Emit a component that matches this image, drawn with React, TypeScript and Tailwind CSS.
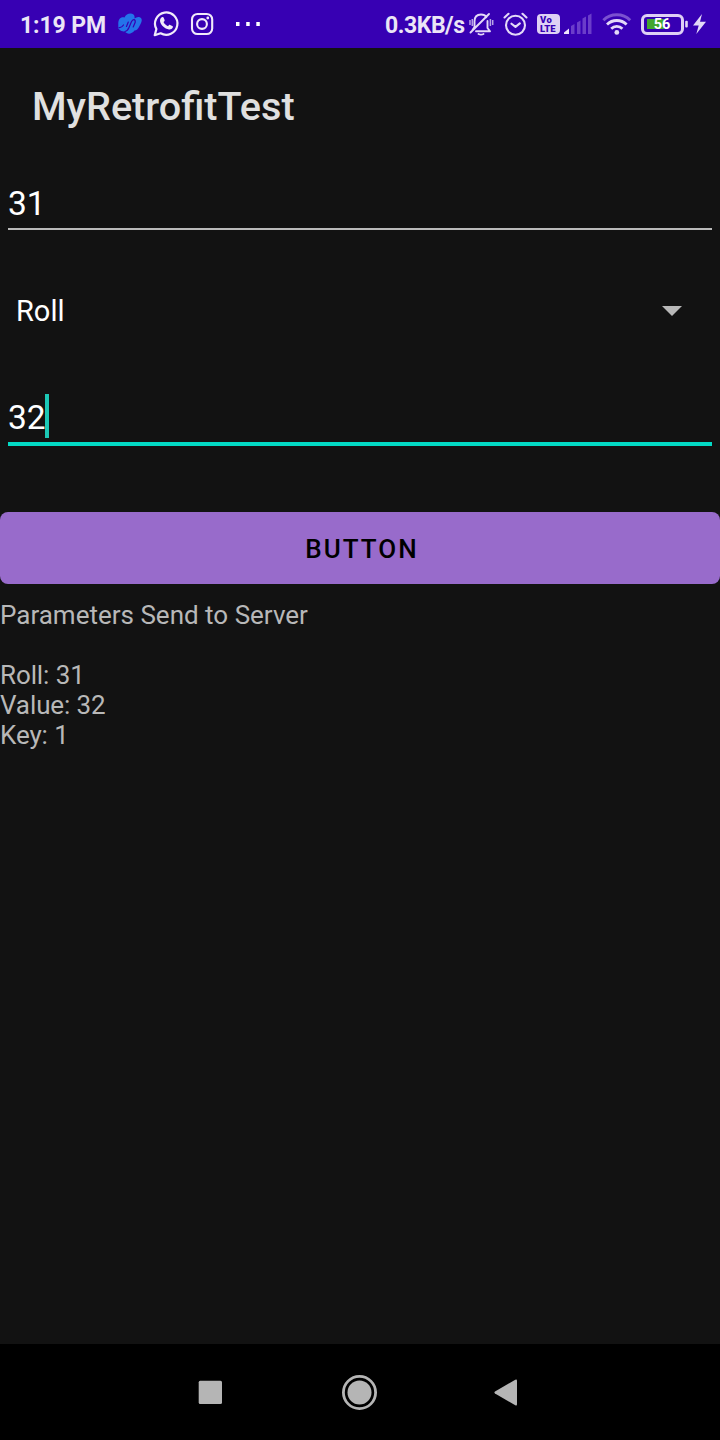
import type { ReactNode } from 'react';

function Icon({ x, w, className = '', children }: { x: number; w: number; className?: string; children: ReactNode }) {
  return (
    <svg width={w} height={48} viewBox={`${x} 0 ${w} 48`} fill="none" className={`shrink-0 ${className}`}>
      {children}
    </svg>
  );
}

const INK = '#e4d9f8';

function StatusBar() {
  return (
    <header className="flex h-12 shrink-0 items-center justify-between bg-[#3700b3] pl-5 pr-3 text-[#ebe5f6]">
      <div className="flex items-center">
        <span className="w-[97px] whitespace-nowrap pt-[4px] text-[23px] leading-7 font-bold tracking-[-0.1px]">1:19 PM</span>
        <Icon x={117} w={27}>
          <path d="M118.300 24.500C118 19 121 16.500 124.500 17.500 126 13.500 131 12.500 133.500 14.500 134.500 15.500 134.800 17 134.500 18.500 137 16.500 140 16.500 141.300 18.500 142.500 20.500 141 23.500 139.500 26 138 29 136.500 30.500 134.500 30.500 131.500 34.500 127 34.500 125 31.500 122 31.500 118.300 30 118.300 27.500z" fill="#2474ea" />
          <path d="M119 27.500q2.500.5 4.500-2.500M125 31.500q2.500-.5 4-4l2.300-5.500q1.200-2.500 2.700-2.300t1.200 2.600l-2 4.700M128.300 22l-1.800 4.500" stroke="#3700b3" strokeWidth="1.200" strokeLinecap="round" />
        </Icon>
        <Icon x={152} w={28} className="ml-2">
          <path d="M154.700 35.200l1.700-6.200a11.200 11.200 0 1 1 4.200 4.300z" stroke="#f1eafa" strokeWidth="2.200" strokeLinejoin="round" />
          <path d="M161.800 17.300c.6-.5 1.500-.4 1.800.3l1 2.300c.2.600-.1 1.200-1.100 2.100 1 2 2.600 3.400 4.600 4.200.9-1.300 1.400-1.600 2-1.300l2.200 1.100c.6.300.8.8.5 1.600-.6 1.500-2.300 2.200-3.800 1.900-4.600-.9-8-4.200-8.900-8-.3-1.800.4-3.300 1.700-4.200z" fill="#f1eafa" />
        </Icon>
        <Icon x={190} w={25} className="ml-2.5">
          <rect x="192" y="14" width="20.200" height="20" rx="5.500" stroke="#f1eafa" strokeWidth="2.100" />
          <circle cx="202" cy="24" r="4.900" stroke="#f1eafa" strokeWidth="2.100" />
          <circle cx="207.800" cy="18" r="1.400" fill="#f1eafa" />
        </Icon>
        <Icon x={234} w={28} className="ml-[19px]">
          <path d="M236 22h3.500v4H236zM246.200 22h3.500v4h-3.500zM256.300 22h3.500v4h-3.500z" fill="#fff" />
        </Icon>
      </div>
      <div className="flex items-center">
        <span className="w-[83px] whitespace-nowrap pt-[4px] text-[23px] leading-7 font-bold tracking-[-0.450px]">0.3KB/s</span>
        <Icon x={468} w={27}>
          <g stroke={INK} strokeWidth="1.900" strokeLinecap="round" strokeLinejoin="round">
            <path d="M474.500 27V21.500c0-4.500 2.500-7 6.500-7 2.600 0 4.500 1 5.500 2.700M487.500 21v7l2.500 3.300h-14M474.500 27l-2 3M489 14l-18.500 18.500" />
            <path d="M478.500 34q2.500 1.300 5 0" />
          </g>
          <path d="M470 20v5M472.300 19v7M490.400 19v7M492.700 20v5" stroke={INK} strokeWidth="1.500" opacity=".75" />
        </Icon>
        <Icon x={502} w={27} className="ml-[7px]">
          <g stroke={INK} strokeWidth="2.100" strokeLinecap="round" strokeLinejoin="round">
            <circle cx="515.500" cy="25.300" r="9.500" />
            <path d="M511.500 23.700l4 3.200 4.300-3.500M504.500 17.500l4-3.700M526.500 17.500l-4-3.700" />
          </g>
        </Icon>
        <div className="ml-2 flex h-5 w-[23px] flex-col items-start justify-center rounded-[4px] bg-[#dfd0f5] pl-[3px] text-[9.500px] leading-[9px] font-black text-[#3700b3]">
          <span className="tracking-[0.4px]">Vo</span>
          <span>LTE</span>
        </div>
        <Icon x={563} w={30} className="ml-[3px]">
          <path d="M564 34v-1.500l5-4V34z" fill="#efe6fc" />
          <path d="M571 26l3.500-2v10H571zM577 22.500l3.500-2V34H577zM582.500 18.500l3.500-2V34h-3.500zM588 15.500l3.500-2V34H588z" fill="#6b3dca" />
        </Icon>
        <Icon x={602} w={30} className="ml-[9px]">
          <path d="M603.400 20.200a19 19 0 0 1 26.800 0" stroke="#7b51d0" strokeWidth="3" />
          <path d="M607 24.500a14 14 0 0 1 19.600 0M611.200 28.700a8 8 0 0 1 11.200 0" stroke="#e4d9f8" strokeWidth="2.800" />
          <circle cx="616.800" cy="32.400" r="2.400" fill={INK} />
        </Icon>
        <div className="ml-[9px] flex h-[21px] w-[43px] items-center rounded-[6px] border-3 border-[#dfd0f5] px-[3px]">
          <div className="flex h-[10px] w-full items-center justify-center bg-linear-to-r from-[#43a52f] from-55% to-transparent to-55% text-[14.500px] leading-none font-bold text-white">
            <span className="-ml-px pt-[3px]">56</span>
          </div>
        </div>
        <Icon x={684} w={24}>
          <rect x="685.200" y="20.700" width="2.600" height="6.800" rx="1" fill={INK} />
          <path d="M702 14l-9 11.500h5.700L696.300 34 706 21.800h-6z" fill={INK} />
        </Icon>
      </div>
    </header>
  );
}

function NavBar() {
  return (
    <nav className="flex h-24 shrink-0 items-center bg-black pl-[198px] text-[#b5b5b5]">
      <svg width="24" height="24" viewBox="0 0 24 24">
        <rect x=".7" y=".8" width="23.300" height="23.200" rx="1.500" fill="currentColor" />
      </svg>
      <svg width="36" height="36" viewBox="0 0 36 36" fill="none" className="ml-[120px]">
        <circle cx="17.500" cy="18.500" r="16.100" stroke="currentColor" strokeWidth="2.800" />
        <circle cx="17.500" cy="18.500" r="12" fill="currentColor" />
      </svg>
      <svg width="24" height="28" viewBox="0 0 24 28" className="ml-[116px]">
        <path d="M1 13.500Q-.2 14.400 1 15.400L21.300 27.300q1.700.8 1.700-1V2.700q0-1.700-1.700-1z" fill="currentColor" />
      </svg>
    </nav>
  );
}

export default function App() {
  return (
    <div className="flex h-[1440px] w-[720px] flex-col overflow-hidden bg-[#121212] font-['Roboto',sans-serif]">
      <StatusBar />
      <h1 className="flex h-28 shrink-0 items-center pl-8 pt-[6px] text-[39.600px] font-medium text-[#e0e0e0]">MyRetrofitTest</h1>
      <main className="flex grow flex-col">
        <div className="mx-2 mt-4 flex h-[54px] items-end border-b-2 border-[#bababa] pb-[4px] text-[33.500px] leading-[40px] text-white">31</div>
        <div className="ml-4 mr-[38px] mt-[57px] flex h-12 items-center justify-between text-[29px] text-white">
          <span className="pt-px">Roll</span>
          <svg width="20" height="10" viewBox="0 0 20 10">
            <path d="M0 0h20L10 10z" fill="#b8b8b8" />
          </svg>
        </div>
        <div className="mx-2 mt-[59px] flex h-[52px] items-start border-b-4 border-[#03dac5] text-[33.500px] leading-[48px] text-white">
          <span className="w-[37px]">32</span>
          <span className="h-11 w-1 bg-[#1cc8b5]" />
        </div>
        <button className="mt-[66px] h-[72px] rounded-lg bg-[#986bcb] pl-[4px] pt-[2px] text-[26px] font-medium tracking-[2.050px] text-black">BUTTON</button>
        <p className="mt-4 whitespace-pre-line text-[26px] leading-[30px] text-[#b8b8b8]">
          Parameters Send to Server
          <span className="tracking-[-0.1px]">{'\n\nRoll: 31\nValue: 32\nKey: 1'}</span>
        </p>
      </main>
      <NavBar />
    </div>
  );
}
